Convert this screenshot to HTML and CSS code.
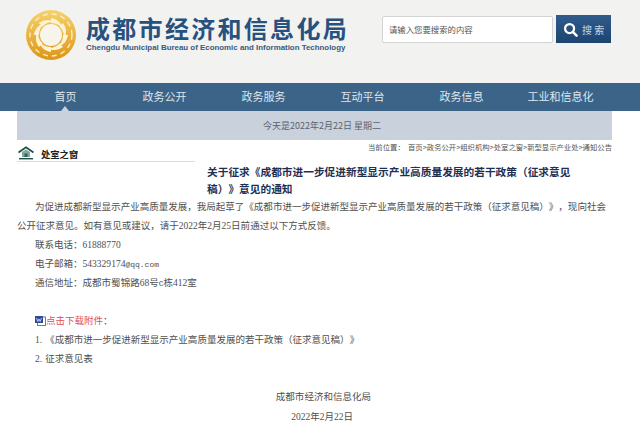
FILE: index.html
```html
<!DOCTYPE html>
<html lang="zh-CN">

<head>
    <meta charset="UTF-8">
    <meta name="viewport" content="width=device-width, initial-scale=1.0">
    <title>关于征求意见的通知</title>
    <link rel="stylesheet" href="styles.css">
</head>

<body>

    <div class="header">
        <svg class="logo" width="52" height="52" viewBox="0 0 52 52">
            <defs>
                <linearGradient id="gold" x1="0" y1="0" x2="0" y2="1">
                    <stop offset="0" stop-color="#f6d26c" />
                    <stop offset="1" stop-color="#dd9618" />
                </linearGradient>
                <path id="blade" d="M26 9 C32 10 37 14 38 20 C35 16 31 14 26 14 Z" fill="#fff3d2" />
            </defs>
            <circle cx="26" cy="26" r="25" fill="url(#gold)" />
            <circle cx="26" cy="26" r="21" fill="none" stroke="#fdeebf" stroke-width="1.4" stroke-dasharray="5 4" />
            <use href="#blade" />
            <use href="#blade" transform="rotate(45 26 26)" />
            <use href="#blade" transform="rotate(90 26 26)" />
            <use href="#blade" transform="rotate(135 26 26)" />
            <use href="#blade" transform="rotate(180 26 26)" />
            <use href="#blade" transform="rotate(225 26 26)" />
            <use href="#blade" transform="rotate(270 26 26)" />
            <use href="#blade" transform="rotate(315 26 26)" />
            <circle cx="26" cy="26" r="11" fill="#f7f4ec" />
        </svg>
        <div class="brand">
            <div class="brand-cn">成都市经济和信息化局</div>
            <div class="brand-en">Chengdu Municipal Bureau of Economic and Information Technology</div>
        </div>
        <div class="search">
            <div class="search-input">请输入您要搜索的内容</div>
            <div class="search-btn">
                <svg width="15" height="15" viewBox="0 0 16 16">
                    <circle cx="7" cy="7" r="4.8" fill="none" stroke="#fff" stroke-width="2.4" />
                    <path d="M10.5 10.5 L14.5 14.5" stroke="#fff" stroke-width="2.6" stroke-linecap="round" />
                </svg>
                <span>搜 索</span>
            </div>
        </div>
    </div>

    <div class="nav">
        <div class="nav-item nav-active">首页</div>
        <div class="nav-item">政务公开</div>
        <div class="nav-item">政务服务</div>
        <div class="nav-item">互动平台</div>
        <div class="nav-item">政务信息</div>
        <div class="nav-item">工业和信息化</div>
    </div>

    <div class="main">
        <div class="date-bar">今天是2022年2月22日 星期二</div>

        <div class="top-row">
            <div class="side-title">
                <svg width="16" height="14" viewBox="0 0 16 14">
                    <path d="M0.5 6.5 L8 1.2 L15.5 6.5" fill="none" stroke="#1f4f48" stroke-width="1.7" />
                    <path d="M4 6 L8 3.4 L12 6 V11 H4 Z" fill="#7fa79c" />
                    <rect x="6.5" y="7.5" width="3" height="3.5" fill="#2f6258" />
                    <rect x="1" y="12" width="14" height="1.4" fill="#1f4f48" />
                </svg>
                <span>处室之窗</span>
            </div>
            <div class="crumbs">当前位置：&nbsp; 首页&gt;政务公开&gt;组织机构&gt;处室之窗&gt;新型显示产业处&gt;通知公告</div>
        </div>

        <h1 class="title">关于征求《成都市进一步促进新型显示产业高质量发展的若干政策（征求意见<br>稿）》意见的通知</h1>

        <div class="content">
            <p class="indent">为促进成都新型显示产业高质量发展，我局起草了《成都市进一步促进新型显示产业高质量发展的若干政策（征求意见稿）》，现向社会</p>
            <p>公开征求意见。如有意见或建议，请于<span class="num">2022</span>年<span class="num">2</span>月<span class="num">25</span>日前通过以下方式反馈。</p>
            <p class="indent">联系电话：<span class="num">61888770</span></p>
            <p class="indent">电子邮箱：<span class="num">543329174</span><span class="mono">@qq.com</span></p>
            <p class="indent">通信地址：成都市蜀锦路<span class="num">68</span>号<span class="mono">C</span>栋<span class="num">412</span>室</p>
            <p class="indent">&nbsp;</p>
            <p class="indent attach">
                <svg width="11" height="11" viewBox="0 0 11 11">
                    <rect x="2.5" y="2" width="8" height="8.5" fill="#fff" stroke="#6a7aa6" stroke-width="1" />
                    <rect x="0" y="1" width="8" height="7" fill="#2f4a96" />
                    <path d="M1.5 3 L2.8 6.5 L4 4 L5.2 6.5 L6.5 3" fill="none" stroke="#dfe6f5" stroke-width="0.8" />
                </svg><span class="red">点击下载附件</span>：
            </p>
            <p class="indent"><span class="num list-no">1.</span>《成都市进一步促进新型显示产业高质量发展的若干政策（征求意见稿）》</p>
            <p class="indent"><span class="num list-no">2.</span>征求意见表</p>
            <p class="indent">&nbsp;</p>
            <p class="sign">成都市经济和信息化局</p>
            <p class="sign-date"><span class="num">2022</span>年<span class="num">2</span>月<span class="num">22</span>日</p>
        </div>
    </div>

</body>

</html>
```

FILE: styles.css
```css
* {
    padding: 0;
    margin: 0;
    box-sizing: border-box;
}

body {
    background-color: #fff;
    font-family: "Noto Sans CJK SC", "Liberation Sans", sans-serif;
    color: #4f4f4f;
    overflow: hidden;
    text-spacing-trim: space-all;
}

.header {
    height: 83px;
    background-color: #f2f2f1;
    display: flex;
    padding: 9px 0 0 25px;
}

.logo {
    flex: none;
}

.brand {
    margin-left: 8px;
    width: 270px;
    padding-left: 1px;
}

.brand-cn {
    font-size: 24px;
    line-height: 26px;
    font-weight: 700;
    letter-spacing: 2.3px;
    color: #27517f;
    margin-top: 6px;
}

.brand-en {
    font-family: "Liberation Sans", sans-serif;
    font-size: 7.9px;
    line-height: 10px;
    font-weight: 700;
    color: #3a5a7c;
    white-space: nowrap;
    margin-top: 2px;
}

.search {
    display: flex;
    margin-left: 27px;
    margin-top: 6px;
    height: 28px;
}

.search-input {
    width: 171px;
    height: 27px;
    margin-top: 1px;
    background-color: #fff;
    border: 1px solid #d4d4d4;
    border-radius: 2px;
    padding-left: 6px;
    font-size: 8.4px;
    line-height: 25px;
    color: #555;
}

.search-btn {
    width: 55px;
    margin-left: 3px;
    background: linear-gradient(#2f5c8c, #1d4470);
    display: flex;
    align-items: center;
    padding-left: 7px;
    gap: 4px;
    color: #c9d6e4;
    font-size: 10px;
    white-space: nowrap;
}

.nav {
    height: 28px;
    background-color: #3c6488;
    display: flex;
    padding-left: 16px;
}

.nav-item {
    width: 99px;
    text-align: center;
    font-size: 11px;
    line-height: 27px;
    color: #dfe7ee;
}

.nav-active {
    position: relative;
}

.nav-active::after {
    content: "";
    position: absolute;
    left: 45px;
    bottom: 0;
    border-left: 4px solid transparent;
    border-right: 4px solid transparent;
    border-bottom: 5px solid #c8d1dc;
}

.main {
    width: 595px;
    margin-left: 17px;
}

.date-bar {
    height: 29px;
    background-color: #c8d1dc;
    text-align: center;
    font-size: 9px;
    line-height: 29px;
    color: #5a6470;
    padding-left: 15px;
}

.top-row {
    display: flex;
    justify-content: space-between;
}

.side-title {
    width: 178px;
    height: 22px;
    border-bottom: 1px solid #dcdce4;
    display: flex;
    align-items: flex-end;
    gap: 7px;
    padding: 0 0 1px 1px;
    font-size: 9.3px;
    line-height: 12px;
    font-weight: 700;
    color: #222;
}

.crumbs {
    font-size: 7.35px;
    line-height: 13px;
    color: #555;
    white-space: nowrap;
}

.title {
    font-size: 10.7px;
    line-height: 17px;
    font-weight: 700;
    color: #1f2f52;
    margin-left: 190px;
    margin-top: 1px;
    white-space: nowrap;
}

.content {
    font-size: 9.53px;
    line-height: 19.05px;
    white-space: nowrap;
}

.indent {
    padding-left: 18px;
}

.num {
    font-family: "Liberation Serif", serif;
    line-height: 1;
}

.list-no {
    margin-right: 3px;
}

.mono {
    font-family: "Liberation Mono", monospace;
    font-size: 8px;
    line-height: 1;
}

.attach svg {
    vertical-align: -2px;
}

.red {
    color: #de4f58;
}

.sign {
    width: 354px;
    text-align: right;
}

.sign-date {
    width: 336px;
    text-align: right;
}
```
